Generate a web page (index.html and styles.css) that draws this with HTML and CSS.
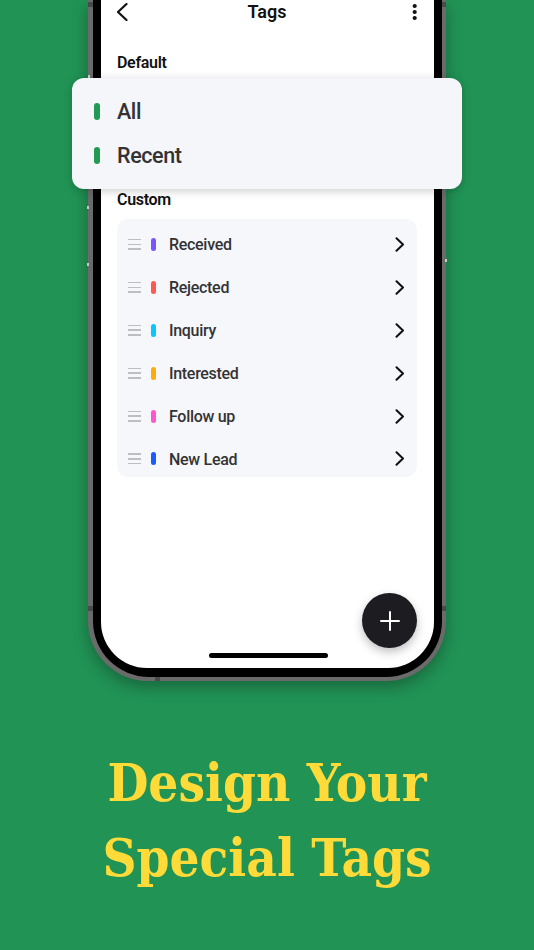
FILE: index.html
```html
<!DOCTYPE html>
<html lang="en">
<head>
<meta charset="utf-8">
<title>Design Your Special Tags</title>
<link rel="stylesheet" href="styles.css">
</head>
<body>
<main class="page">
  <div class="phone">
    <span class="mark mark-l1"></span><span class="mark mark-l2"></span><span class="mark mark-l3"></span><span class="mark mark-r1"></span>
    <span class="seam seam-lt"></span><span class="seam seam-rt"></span><span class="seam seam-lb"></span><span class="seam seam-rb"></span><span class="seam seam-b"></span>
    <div class="bezel">
      <div class="screen">
        <header class="topbar">
          <svg class="back" width="12" height="18" viewBox="0 0 12 18"><path d="M9.500 1 1 9l8.500 8" fill="none" stroke="#111" stroke-width="2.200" stroke-linecap="round" stroke-linejoin="round"/></svg>
          <h1 class="title">Tags</h1>
          <svg class="more" width="12" height="18" viewBox="0 0 12 18"><circle cx="9.700" cy="3" r="2.100" fill="#111"/><circle cx="9.700" cy="9" r="2.100" fill="#111"/><circle cx="9.700" cy="15" r="2.100" fill="#111"/></svg>
        </header>
        <h2 class="section section-default">Default</h2>
        <h2 class="section section-custom">Custom</h2>
        <ul class="list">
          <li class="row"><span class="handle"><i></i><i></i><i></i></span><span class="tag tag-purple"></span><span class="name">Received</span><svg class="chev" width="10" height="15" viewBox="0 0 10 15"><path d="M1.500 1.200 8 7.500l-6.500 6.300" fill="none" stroke="#111" stroke-width="2" stroke-linecap="round" stroke-linejoin="round"/></svg></li>
          <li class="row"><span class="handle"><i></i><i></i><i></i></span><span class="tag tag-red"></span><span class="name">Rejected</span><svg class="chev" width="10" height="15" viewBox="0 0 10 15"><path d="M1.500 1.200 8 7.500l-6.500 6.300" fill="none" stroke="#111" stroke-width="2" stroke-linecap="round" stroke-linejoin="round"/></svg></li>
          <li class="row"><span class="handle"><i></i><i></i><i></i></span><span class="tag tag-cyan"></span><span class="name">Inquiry</span><svg class="chev" width="10" height="15" viewBox="0 0 10 15"><path d="M1.500 1.200 8 7.500l-6.500 6.300" fill="none" stroke="#111" stroke-width="2" stroke-linecap="round" stroke-linejoin="round"/></svg></li>
          <li class="row"><span class="handle"><i></i><i></i><i></i></span><span class="tag tag-amber"></span><span class="name">Interested</span><svg class="chev" width="10" height="15" viewBox="0 0 10 15"><path d="M1.500 1.200 8 7.500l-6.500 6.300" fill="none" stroke="#111" stroke-width="2" stroke-linecap="round" stroke-linejoin="round"/></svg></li>
          <li class="row"><span class="handle"><i></i><i></i><i></i></span><span class="tag tag-pink"></span><span class="name">Follow up</span><svg class="chev" width="10" height="15" viewBox="0 0 10 15"><path d="M1.500 1.200 8 7.500l-6.500 6.300" fill="none" stroke="#111" stroke-width="2" stroke-linecap="round" stroke-linejoin="round"/></svg></li>
          <li class="row"><span class="handle"><i></i><i></i><i></i></span><span class="tag tag-blue"></span><span class="name">New Lead</span><svg class="chev" width="10" height="15" viewBox="0 0 10 15"><path d="M1.500 1.200 8 7.500l-6.500 6.300" fill="none" stroke="#111" stroke-width="2" stroke-linecap="round" stroke-linejoin="round"/></svg></li>
        </ul>
        <button class="fab" aria-label="Add"><svg width="20" height="20" viewBox="0 0 20 20"><path d="M10 1v18M1 10h18" stroke="#fff" stroke-width="2" stroke-linecap="round"/></svg></button>
        <span class="home"></span>
      </div>
    </div>
  </div>
  <section class="popup">
    <div class="popup-row"><span class="popup-bar"></span><span class="popup-name">All</span></div>
    <div class="popup-row"><span class="popup-bar"></span><span class="popup-name">Recent</span></div>
  </section>
  <p class="headline">Design Your<br>Special Tags</p>
</main>
</body>
</html>
```
FILE: styles.css
```css
* { box-sizing: border-box; }
html, body { margin: 0; padding: 0; }
body { font-family: Roboto, "Liberation Sans", sans-serif; background: #219355; }
.page {
  position: relative;
  width: 534px;
  height: 950px;
  overflow: hidden;
  background: #219355;
  display: flex;
  flex-direction: column;
  align-items: center;
}
.phone {
  position: relative;
  flex: none;
  width: 358px;
  height: 681px;
  padding: 0 4px 4px 5px;
  background: #6a6a6a;
  border-radius: 0 0 60px 60px;
  box-shadow: 0 6px 16px rgba(0, 0, 0, .3);
}
.bezel {
  height: 100%;
  padding: 0 8px 9px;
  background: #000;
  border-radius: 0 0 56px 56px;
}
.screen {
  position: relative;
  height: 100%;
  padding: 0 17px 0 16px;
  background: #fff;
  border-radius: 0 0 46px 46px;
  display: flex;
  flex-direction: column;
}
.topbar {
  height: 24px;
  display: flex;
  align-items: center;
  justify-content: space-between;
}
.title {
  margin: 0 0 2px;
  font-size: 18px;
  font-weight: 600;
  color: #111;
}
.section {
  margin: 0;
  font-size: 16px;
  letter-spacing: -.3px;
  line-height: 20px;
  font-weight: 600;
  color: #111;
}
.section-default { margin-top: 29px; }
.section-custom { margin-top: 117px; }
.list {
  list-style: none;
  margin: 9px 0 0;
  padding: 4px 0 0;
  height: 258px;
  background: #f6f7fb;
  border-radius: 11px;
}
.row {
  height: 42.900px;
  padding: 0 12px 0 11px;
  display: flex;
  align-items: center;
}
.handle {
  width: 13px;
  height: 11px;
  display: flex;
  flex-direction: column;
  justify-content: space-between;
}
.handle i {
  display: block;
  height: 1.500px;
  background: #bdbdc2;
}
.tag {
  width: 5px;
  height: 13px;
  margin-left: 10px;
  border-radius: 3px;
}
.tag-purple { background: #7a55ff; }
.tag-red { background: #ff5a52; }
.tag-cyan { background: #0cc4ff; }
.tag-amber { background: #ffac0a; }
.tag-pink { background: #ff55cf; }
.tag-blue { background: #1a5cff; }
.name {
  flex: 1;
  margin-left: 13px;
  padding-top: 1.500px;
  font-size: 16px;
  letter-spacing: -.3px;
  line-height: 20px;
  font-weight: 500;
  color: #333;
}
.fab {
  position: absolute;
  right: 17px;
  bottom: 20px;
  width: 55px;
  height: 55px;
  padding: 0;
  border: 0;
  border-radius: 50%;
  background: #1d1c21;
  box-shadow: 0 4px 10px rgba(0, 0, 0, .25);
  display: flex;
  align-items: center;
  justify-content: center;
}
.home {
  position: absolute;
  left: 108px;
  bottom: 10px;
  width: 119px;
  height: 5px;
  background: #000;
  border-radius: 3px;
}
.mark, .seam { position: absolute; }
.mark { width: 2px; height: 3px; background: #c8c8c8; z-index: 1; }
.mark-l1 { left: 0; top: 75px; }
.mark-l2 { left: -1px; top: 206px; }
.mark-l3 { left: -1px; top: 263px; }
.mark-r1 { right: -1px; top: 259px; }
.seam { background: #4a4a4a; }
.seam-lt { left: 0; top: 2px; width: 5px; height: 5px; }
.seam-rt { right: 0; top: 2px; width: 4px; height: 5px; }
.seam-lb { left: 0; top: 606px; width: 5px; height: 5px; }
.seam-rb { right: 0; top: 606px; width: 4px; height: 5px; }
.seam-b { left: 67px; bottom: 0; width: 5px; height: 4px; }
.popup {
  position: absolute;
  left: 72px;
  top: 78px;
  width: 390px;
  height: 111px;
  padding: 11px 22px;
  background: #f5f6fa;
  border-radius: 12px;
  box-shadow: 0 2px 10px rgba(0, 0, 0, .2);
}
.popup-row {
  height: 44.500px;
  display: flex;
  align-items: center;
}
.popup-bar {
  width: 6px;
  height: 17px;
  border-radius: 3px;
  background: #219a56;
}
.popup-name {
  margin-left: 17px;
  font-size: 21.500px;
  letter-spacing: -.4px;
  font-weight: 500;
  color: #333;
}
.headline {
  margin: 64px 0 0;
  font-family: "DejaVu Serif Condensed", "Liberation Serif", serif;
  font-size: 52.500px;
  line-height: 75px;
  font-weight: 700;
  text-align: center;
  color: #ffdb3a;
}
```
